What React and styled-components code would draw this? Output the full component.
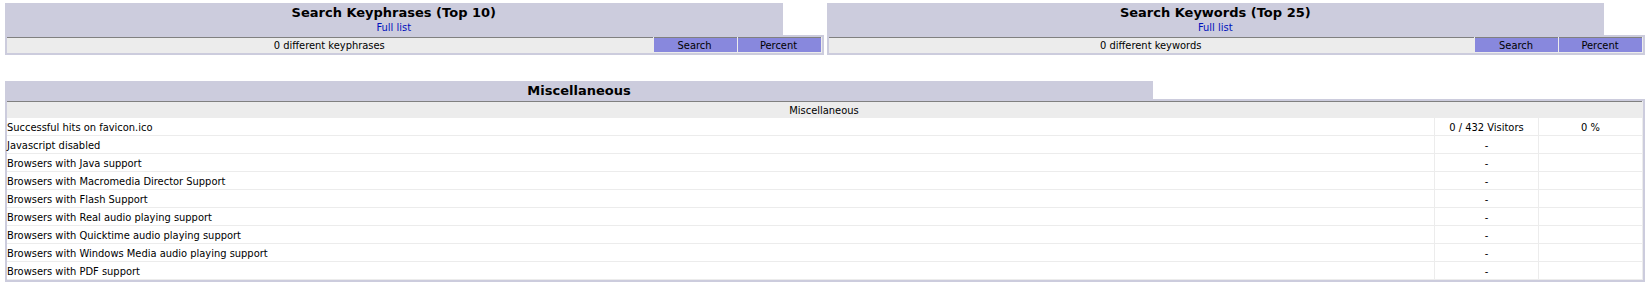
import React from 'react';
import styled, { createGlobalStyle } from 'styled-components';

const GlobalStyle = createGlobalStyle`
body {
  margin: 0;
  background: #ffffff;
  font-family: "DejaVu Sans Condensed", "DejaVu Sans", sans-serif;
}
`

const Page = styled.div`
padding: 3px 5px 0 5px;
display: flex;
flex-direction: column;
gap: 26px;
`

const TopRow = styled.div`
display: flex;
gap: 3px;
`

const Panel = styled.div`
flex: 1;
display: flex;
flex-direction: column;
`

const TitleRow = styled.div`
display: flex;
`

const Title = styled.div`
width: ${p => p.$w};
background: #ccccdd;
padding: 2px 1px ${p => p.$pb || '0'} 1px;
box-sizing: border-box;
text-align: center;
color: #000;
font-family: "DejaVu Sans", sans-serif;
font-size: 13px;
font-weight: bold;
line-height: 16px;

a {
  display: block;
  font-family: "DejaVu Sans Condensed", "DejaVu Sans", sans-serif;
  font-size: 11px;
  font-weight: normal;
  line-height: 13px;
  color: #0011bb;
  text-decoration: none;
}
`

const Blank = styled.div`
flex: 1;
background: #ffffff;
`

const Body = styled.div`
background: #ccccdd;
padding: 2px;
`

const Data = styled.table`
width: 100%;
border-collapse: collapse;
table-layout: fixed;
background: #ffffff;
border-top: 1px solid #808080;
font-size: 11px;
line-height: 13px;
color: #000;
`

const Head = styled.th`
background: ${p => p.$accent ? '#8888dd' : '#ececec'};
border-right: 1px solid #ececec;
border-bottom: 1px solid #ececec;
padding: ${p => p.$tall ? '2px 2px 0 1px' : '1px 2px 0 1px'};
font-weight: normal;
text-align: center;
`

const Cell = styled.td`
border-right: 1px solid #ececec;
border-bottom: 1px solid #ececec;
padding: ${p => p.$label ? '1px 0 0 0' : '3px 2px 1px 2px'};
text-align: ${p => p.$label ? 'left' : 'center'};
white-space: nowrap;
`

const SearchPanel = ({ title, count }) => (
  <Panel>
    <TitleRow>
      <Title $w="95%" $pb="1px">
        {title}
        <a href="#">Full list</a>
      </Title>
      <Blank />
    </TitleRow>
    <Body>
      <Data>
        <colgroup>
          <col />
          <col style={{ width: 84 }} />
          <col style={{ width: 84 }} />
        </colgroup>
        <thead>
          <tr>
            <Head>{count}</Head>
            <Head $accent>Search</Head>
            <Head $accent>Percent</Head>
          </tr>
        </thead>
      </Data>
    </Body>
  </Panel>
)

const miscRows = [
  ['Successful hits on favicon.ico', '0 / 432 Visitors', '0 %'],
  ['Javascript disabled', '-', ''],
  ['Browsers with Java support', '-', ''],
  ['Browsers with Macromedia Director Support', '-', ''],
  ['Browsers with Flash Support', '-', ''],
  ['Browsers with Real audio playing support', '-', ''],
  ['Browsers with Quicktime audio playing support', '-', ''],
  ['Browsers with Windows Media audio playing support', '-', ''],
  ['Browsers with PDF support', '-', ''],
]

const App = () => {
  return (
    <>
      <GlobalStyle />
      <Page>
        <TopRow>
          <SearchPanel title="Search Keyphrases (Top 10)" count="0 different keyphrases" />
          <SearchPanel title="Search Keywords (Top 25)" count="0 different keywords" />
        </TopRow>
        <Panel>
          <TitleRow>
            <Title $w="70%">Miscellaneous</Title>
            <Blank />
          </TitleRow>
          <Body>
            <Data>
              <colgroup>
                <col />
                <col style={{ width: 104 }} />
                <col style={{ width: 104 }} />
              </colgroup>
              <thead>
                <tr>
                  <Head colSpan={3} $tall>Miscellaneous</Head>
                </tr>
              </thead>
              <tbody>
                {miscRows.map((r, i) => (
                  <tr key={i}>
                    <Cell $label>{r[0]}</Cell>
                    <Cell>{r[1]}</Cell>
                    <Cell>{r[2]}</Cell>
                  </tr>
                ))}
              </tbody>
            </Data>
          </Body>
        </Panel>
      </Page>
    </>
  );
}

export default App;
